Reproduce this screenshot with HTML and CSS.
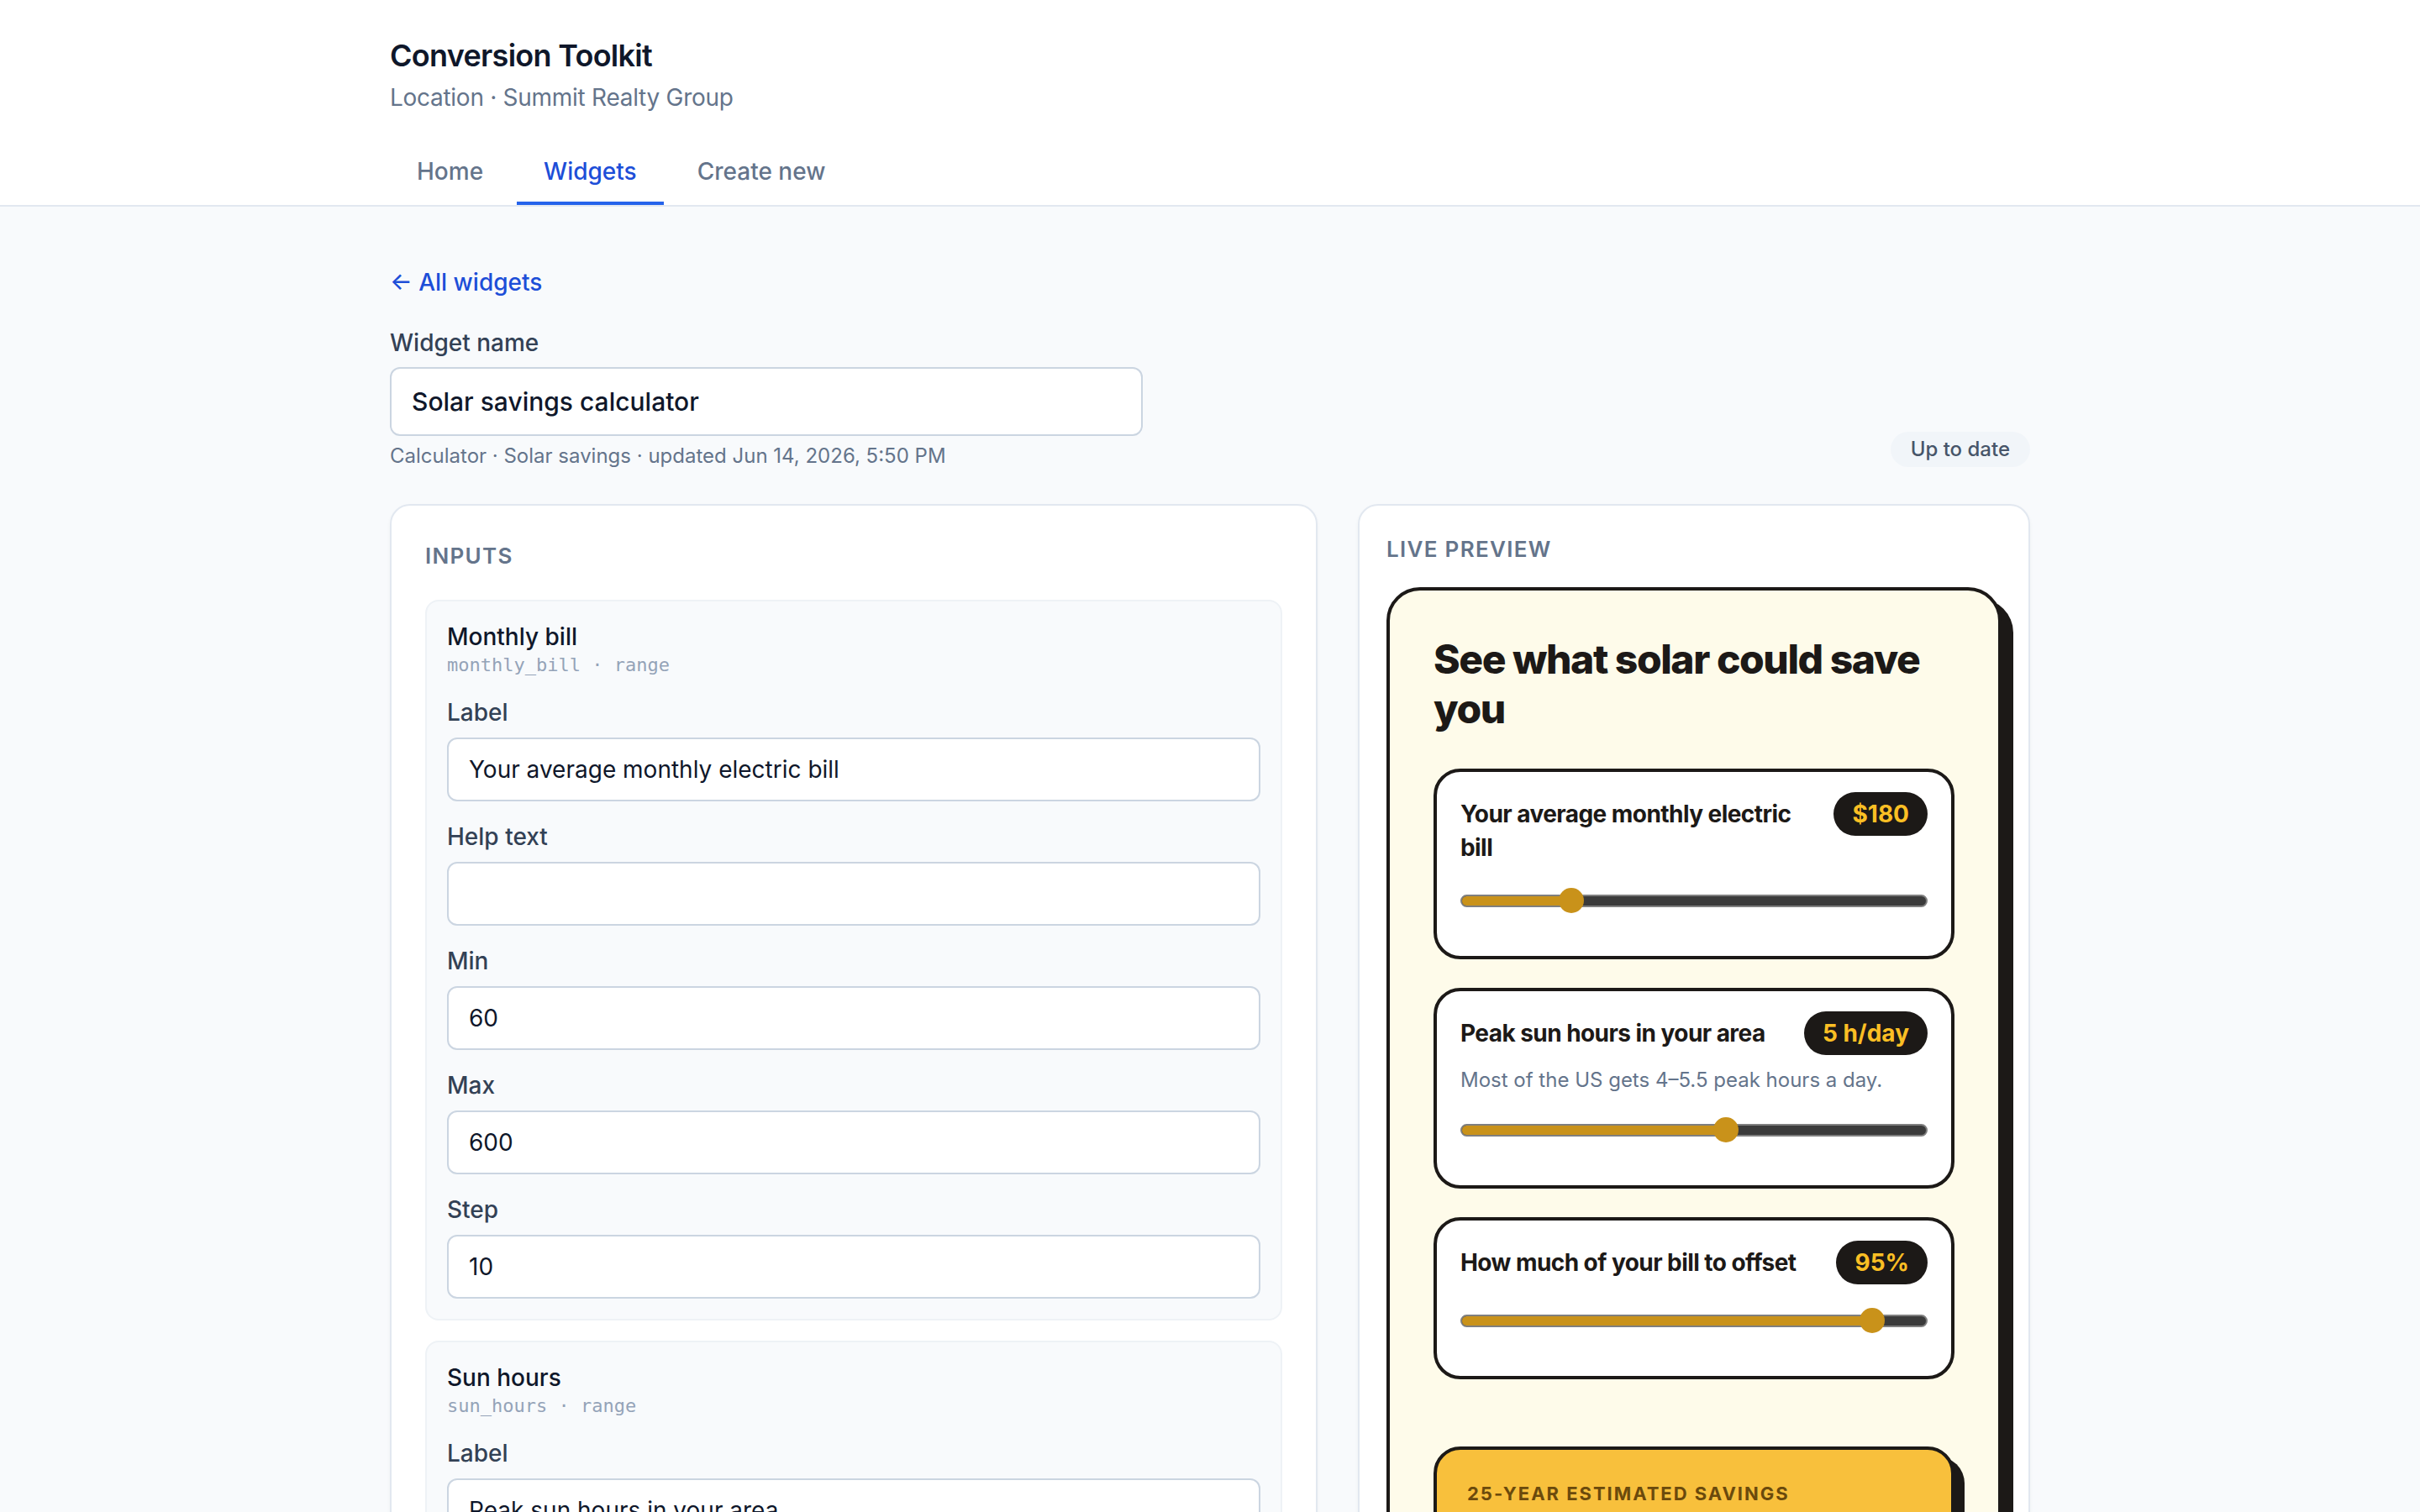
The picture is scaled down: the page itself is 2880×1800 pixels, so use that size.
FILE: index.html
```html
<!DOCTYPE html>
<html lang="en">
<head>
  <meta charset="UTF-8" />
  <meta name="viewport" content="width=device-width, initial-scale=1.0" />
  <title>Conversion Toolkit · Widgets</title>
  <link rel="stylesheet" href="styles.css">
</head>
<body>
  <header class="topbar">
    <div class="container">
      <h1 class="app-title">Conversion Toolkit</h1>
      <p class="app-sub">Location · Summit Realty Group</p>
      <nav class="tabs">
        <a class="tab" href="#">Home</a>
        <a class="tab active" href="#">Widgets</a>
        <a class="tab" href="#">Create new</a>
      </nav>
    </div>
  </header>

  <main class="container page">
    <a class="back-link" href="#">← All widgets</a>

    <div class="name-row">
      <div class="name-field">
        <label class="name-label" for="widgetName">Widget name</label>
        <input id="widgetName" class="name-input" type="text" value="Solar savings calculator">
        <p class="meta">Calculator · Solar savings · updated Jun 14, 2026, 5:50 PM</p>
      </div>
      <span class="status-pill">Up to date</span>
    </div>

    <div class="editor">
      <!-- left: input definitions -->
      <section class="card inputs-card">
        <h2 class="card-title">Inputs</h2>

        <div class="input-group">
          <div class="group-head">
            <div class="group-name">Monthly bill</div>
            <div class="group-key">monthly_bill · range</div>
          </div>
          <label class="field">
            <span class="field-label">Label</span>
            <input class="field-input" type="text" value="Your average monthly electric bill">
          </label>
          <label class="field">
            <span class="field-label">Help text</span>
            <input class="field-input" type="text" value="">
          </label>
          <label class="field">
            <span class="field-label">Min</span>
            <input class="field-input" type="text" value="60">
          </label>
          <label class="field">
            <span class="field-label">Max</span>
            <input class="field-input" type="text" value="600">
          </label>
          <label class="field">
            <span class="field-label">Step</span>
            <input class="field-input" type="text" value="10">
          </label>
        </div>

        <div class="input-group">
          <div class="group-head">
            <div class="group-name">Sun hours</div>
            <div class="group-key">sun_hours · range</div>
          </div>
          <label class="field">
            <span class="field-label">Label</span>
            <input class="field-input" type="text" value="Peak sun hours in your area">
          </label>
          <label class="field">
            <span class="field-label">Help text</span>
            <input class="field-input" type="text" value="Most of the US gets 4–5.5 peak hours a day.">
          </label>
        </div>
      </section>

      <!-- right: rendered widget -->
      <section class="card preview-card">
        <h2 class="card-title">Live preview</h2>

        <div class="widget">
          <h3 class="widget-title">See what solar could save you</h3>

          <div class="sliders">
            <div class="slider-card">
              <div class="slider-head">
                <span class="slider-label">Your average monthly electric bill</span>
                <span class="slider-value">$180</span>
              </div>
              <div class="slider" style="--pos: 23.7%">
                <div class="slider-track"><div class="slider-fill"></div></div>
                <span class="slider-thumb"></span>
              </div>
            </div>

            <div class="slider-card">
              <div class="slider-head">
                <span class="slider-label">Peak sun hours in your area</span>
                <span class="slider-value">5 h/day</span>
              </div>
              <p class="slider-help">Most of the US gets 4–5.5 peak hours a day.</p>
              <div class="slider" style="--pos: 56.8%">
                <div class="slider-track"><div class="slider-fill"></div></div>
                <span class="slider-thumb"></span>
              </div>
            </div>

            <div class="slider-card">
              <div class="slider-head">
                <span class="slider-label">How much of your bill to offset</span>
                <span class="slider-value">95%</span>
              </div>
              <div class="slider" style="--pos: 88.1%">
                <div class="slider-track"><div class="slider-fill"></div></div>
                <span class="slider-thumb"></span>
              </div>
            </div>
          </div>

          <div class="result">
            <div class="result-label">25-year estimated savings</div>
            <div class="result-value">$46,170</div>
          </div>
        </div>
      </section>
    </div>
  </main>
</body>
</html>
```

FILE: styles.css
```css
* {
  box-sizing: border-box;
}

body {
  margin: 0;
  font-family: Inter, "Noto Sans", "Liberation Sans", sans-serif;
  background-color: #f8fafc;
  color: #0f172a;
}

.container {
  width: 1952px;
  margin: 0 auto;
}

/* header */

.topbar {
  background-color: #ffffff;
  border-bottom: 2px solid #e2e8f0;
}

.topbar .container {
  padding-top: 44px;
}

.app-title {
  margin: 0;
  font-size: 36px;
  line-height: 44px;
  font-weight: 600;
  letter-spacing: -0.02em;
  color: #0f172a;
}

.app-sub {
  margin: 10px 0 0;
  font-size: 28px;
  line-height: 36px;
  letter-spacing: -0.01em;
  color: #64748b;
}

.tabs {
  display: flex;
  gap: 8px;
  margin-top: 30px;
}

.tab {
  padding: 20px 32px 16px;
  font-size: 28px;
  line-height: 40px;
  font-weight: 500;
  color: #64748b;
  text-decoration: none;
  border-bottom: 4px solid transparent;
}

.tab.active {
  color: #1d4ed8;
  border-bottom-color: #2563eb;
}

/* name row */

.page {
  padding-top: 70px;
  padding-bottom: 80px;
}

.back-link {
  display: inline-block;
  font-size: 28px;
  line-height: 40px;
  font-weight: 500;
  color: #1d4ed8;
  text-decoration: none;
}

.name-row {
  display: flex;
  justify-content: space-between;
  align-items: flex-end;
  margin-top: 32px;
}

.name-label {
  display: block;
  margin-bottom: 9px;
  font-size: 28px;
  line-height: 40px;
  font-weight: 500;
  color: #334155;
}

.name-input {
  display: block;
  width: 896px;
  padding: 20px 24px;
  border: 2px solid #cbd5e1;
  border-radius: 12px;
  background-color: #ffffff;
  font-family: inherit;
  font-size: 30px;
  line-height: 38px;
  font-weight: 500;
  color: #0f172a;
}

.meta {
  margin: 8px 0 0;
  font-size: 24px;
  line-height: 32px;
  color: #64748b;
}

.status-pill {
  margin-bottom: 3px;
  padding: 5px 24px;
  border-radius: 999px;
  background-color: #f1f5f9;
  font-size: 24px;
  line-height: 32px;
  font-weight: 500;
  color: #475569;
}

/* two columns */

.editor {
  display: grid;
  grid-template-columns: minmax(0, 1fr) 800px;
  gap: 48px;
  align-items: start;
  margin-top: 41px;
}

.card {
  background-color: #ffffff;
  border: 2px solid #e2e8f0;
  border-radius: 24px;
  box-shadow: 0 2px 4px rgba(15, 23, 42, 0.04);
}

.inputs-card {
  padding: 40px;
}

.preview-card {
  padding: 32px;
}

.card-title {
  margin: 0;
  font-size: 26px;
  line-height: 40px;
  font-weight: 600;
  letter-spacing: 0.05em;
  text-transform: uppercase;
  color: #64748b;
}

.inputs-card .card-title {
  margin-bottom: 32px;
}

.preview-card .card-title {
  margin-bottom: 25px;
}

/* input definitions */

.input-group {
  display: flex;
  flex-direction: column;
  gap: 24px;
  padding: 24px;
  background-color: #f8fafc;
  border: 2px solid #eef2f6;
  border-radius: 16px;
}

.input-group + .input-group {
  margin-top: 24px;
}

.group-head {
  margin-bottom: -2px;
}

.group-name {
  font-size: 28px;
  line-height: 36px;
  font-weight: 500;
  color: #0f172a;
}

.group-key {
  font-family: "DejaVu Sans Mono", "Liberation Mono", monospace;
  font-size: 22px;
  line-height: 32px;
  color: #94a3b8;
}

.field {
  display: flex;
  flex-direction: column;
  gap: 12px;
}

.field-label {
  font-size: 28px;
  line-height: 36px;
  font-weight: 500;
  color: #334155;
}

.field-input {
  width: 100%;
  padding: 18px 24px;
  border: 2px solid #cbd5e1;
  border-radius: 12px;
  background-color: #ffffff;
  font-family: inherit;
  font-size: 28px;
  line-height: 36px;
  color: #0f172a;
}

/* preview widget */

.widget {
  padding: 52px;
  background-color: #fefbea;
  border: 4px solid #1c1917;
  border-radius: 40px;
  box-shadow: 14px 14px 0 #1c1917;
  color: #1c1917;
}

.widget-title {
  margin: 0;
  font-size: 48px;
  line-height: 59px;
  font-weight: 800;
  letter-spacing: -0.03em;
}

.sliders {
  display: flex;
  flex-direction: column;
  gap: 34px;
  margin-top: 42px;
}

.slider-card {
  padding: 24px 28px;
  background-color: #ffffff;
  border: 4px solid #1c1917;
  border-radius: 32px;
}

.slider-head {
  display: flex;
  justify-content: space-between;
  align-items: baseline;
  gap: 16px;
}

.slider-label {
  font-size: 28px;
  line-height: 40px;
  font-weight: 700;
  letter-spacing: -0.02em;
}

.slider-value {
  flex-shrink: 0;
  padding: 6px 22px;
  border-radius: 999px;
  background-color: #1c1917;
  font-size: 28px;
  line-height: 40px;
  font-weight: 700;
  color: #fbbf24;
}

.slider-help {
  margin: 14px 0 0;
  font-size: 24px;
  line-height: 32px;
  color: #64748b;
}

.slider {
  position: relative;
  display: flex;
  align-items: center;
  height: 30px;
  margin: 28px 0 27px;
}

.slider-track {
  flex: 1;
  height: 15px;
  border: 2px solid #7f7f7f;
  border-radius: 8px;
  background-color: #3b3b3b;
  overflow: hidden;
}

.slider-fill {
  width: var(--pos);
  height: 100%;
  background-color: #c9921a;
}

.slider-thumb {
  position: absolute;
  top: 0;
  left: calc(var(--pos) - 15px);
  width: 30px;
  height: 30px;
  border-radius: 50%;
  background-color: #c9921a;
}

.result {
  margin-top: 80px;
  padding: 36px;
  background-color: #f8c03c;
  border: 4px solid #1c1917;
  border-radius: 32px;
  box-shadow: 12px 12px 0 #1c1917;
}

.result-label {
  font-size: 22px;
  line-height: 32px;
  font-weight: 700;
  letter-spacing: 0.09em;
  text-transform: uppercase;
  color: #6b4a0c;
}

.result-value {
  margin-top: 8px;
  font-size: 72px;
  line-height: 80px;
  font-weight: 800;
  letter-spacing: -0.03em;
}
```
